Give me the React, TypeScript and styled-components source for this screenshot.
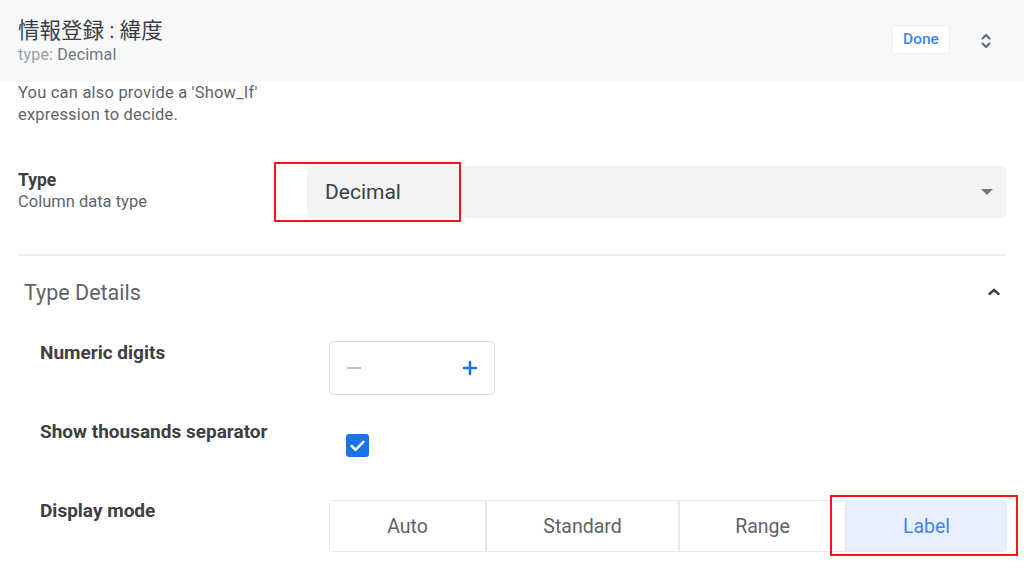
import styled, { createGlobalStyle } from "styled-components";

const Global = createGlobalStyle`
  html, body {
    margin: 0;
    padding: 0;
    background: #ffffff;
    font-family: Roboto, "Noto Sans CJK JP", "Liberation Sans", sans-serif;
  }
  * { box-sizing: border-box; }
`;

const Page = styled.div`
  width: 1024px;
  height: 576px;
  overflow: hidden;
  background: #fff;
`;

const Header = styled.div`
  height: 82px;
  background: #f7f8f9;
  display: flex;
  align-items: center;
  padding: 0 30px 0 18px;
`;

const TitleBlock = styled.div`
  flex: 1;
  display: flex;
  flex-direction: column;
`;

const Title = styled.div`
  font-family: Roboto, "Noto Sans CJK JP", sans-serif;
  font-size: 21.5px;
  line-height: 26px;
  color: #3c4043;
`;

const SubTitle = styled.div`
  font-size: 16px;
  line-height: 20px;
  margin-top: 1px;
  color: #70757a;
  letter-spacing: 0.2px;
  span {
    color: #9aa0a6;
  }
`;

const DoneButton = styled.button`
  width: 58px;
  height: 29px;
  border: 1px solid #eceef0;
  border-radius: 4px;
  background: #fff;
  color: #4285f4;
  font-family: Roboto, sans-serif;
  font-weight: 500;
  font-size: 15.5px;
  padding: 0;
  margin: 0 28px 4px 0;
`;

const IconSlot = styled.div`
  width: 16px;
  height: 16px;
  display: flex;
  align-items: center;
  justify-content: center;
  color: #6b6f73;
`;

const Body = styled.div`
  padding: 0 18px;
`;

const Help = styled.p`
  margin: 0;
  font-size: 16.5px;
  line-height: 22px;
  color: #5f6368;
  letter-spacing: 0.2px;
`;

const TypeRow = styled.div`
  display: grid;
  grid-template-columns: 289px 1fr;
  margin-top: 40px;
`;

const LabelCol = styled.div`
  padding-top: 3px;
`;

const FieldLabel = styled.div`
  font-size: 17.5px;
  font-weight: 700;
  line-height: 22px;
  color: #3c4043;
`;

const FieldHint = styled.div`
  font-size: 16.5px;
  line-height: 22px;
  color: #5f6368;
`;

const SelectWrap = styled.div`
  position: relative;
`;

const Select = styled.div`
  height: 52px;
  background: #f1f3f4;
  border-radius: 5px;
  display: flex;
  align-items: center;
  padding: 0 13px 0 18px;
  font-size: 21px;
  color: #3c4043;
`;

const SelectValue = styled.span`
  flex: 1;
`;

const Caret = styled.span`
  width: 0;
  height: 0;
  border-left: 6px solid transparent;
  border-right: 6px solid transparent;
  border-top: 6px solid #757575;
`;

const Highlight = styled.div<{ $left: number; $top: number; $w: number; $h: number }>`
  position: absolute;
  left: ${(p) => p.$left}px;
  top: ${(p) => p.$top}px;
  width: ${(p) => p.$w}px;
  height: ${(p) => p.$h}px;
  border: 2px solid #f2141b;
  pointer-events: none;
`;

const Divider = styled.hr`
  border: none;
  border-top: 2px solid #eceef0;
  margin: 36px 0 0;
`;

const SectionHead = styled.div`
  display: flex;
  align-items: center;
  justify-content: space-between;
  height: 72px;
  padding: 0 4px 0 6px;
`;

const SectionTitle = styled.div`
  font-size: 21.5px;
  color: #5f6368;
`;

const DetailRow = styled.div<{ $mt: number }>`
  display: grid;
  grid-template-columns: 289px 1fr;
  padding-left: 22px;
  margin-top: ${(p) => p.$mt}px;
`;

const DetailLabel = styled.div`
  font-size: 19px;
  font-weight: 700;
  line-height: 24px;
  color: #3c4043;
`;

const Stepper = styled.div`
  width: 166px;
  height: 54px;
  border: 1px solid #dadce0;
  border-radius: 4px;
  display: flex;
  align-items: center;
  justify-content: space-between;
  padding: 0 16px 0 17px;
`;

const Minus = styled.span`
  width: 14px;
  height: 2px;
  background: #bdc1c6;
`;

const CheckWrap = styled.div`
  padding: 14px 0 0 17px;
`;

const Checkbox = styled.div`
  width: 23px;
  height: 23px;
  border-radius: 3px;
  background: #1a73e8;
  display: flex;
  align-items: center;
  justify-content: center;
`;

const Segments = styled.div`
  position: relative;
  display: flex;
  height: 52px;
  margin-top: 1px;
  border: 1px solid #e8eaed;
  border-radius: 4px;
`;

const Segment = styled.div<{ $active?: boolean }>`
  flex: 1 1 auto;
  display: flex;
  align-items: center;
  justify-content: center;
  font-size: 19.5px;
  color: ${(p) => (p.$active ? "#4285f4" : "#5f6368")};
  background: ${(p) => (p.$active ? "#e8f0fe" : "#fff")};
  border-left: 2px solid #e8eaed;
  &:first-child {
    border-left: none;
  }
  &:last-child {
    border-radius: 0 4px 4px 0;
  }
`;

const segments = [
  { label: "Auto", w: 155 },
  { label: "Standard", w: 193 },
  { label: "Range", w: 167 },
  { label: "Label", w: 161 },
];

export default function App() {
  return (
    <Page>
      <Global />
      <Header>
        <TitleBlock>
          <Title>情報登録 : 緯度</Title>
          <SubTitle>
            <span>type:</span> Decimal
          </SubTitle>
        </TitleBlock>
        <DoneButton>Done</DoneButton>
        <IconSlot>
          <svg width="12" height="18" viewBox="0 0 12 18" fill="none" stroke="currentColor" strokeWidth="2.2" strokeLinecap="round" strokeLinejoin="round">
            <path d="M2.5 6.5 6 3l3.5 3.5" />
            <path d="M2.5 11.5 6 15l3.5-3.5" />
          </svg>
        </IconSlot>
      </Header>
      <Body>
        <Help>
          You can also provide a 'Show_If'
          <br />
          expression to decide.
        </Help>
        <TypeRow>
          <LabelCol>
            <FieldLabel>Type</FieldLabel>
            <FieldHint>Column data type</FieldHint>
          </LabelCol>
          <SelectWrap>
            <Select>
              <SelectValue>Decimal</SelectValue>
              <Caret />
            </Select>
            <Highlight $left={-33} $top={-4} $w={187} $h={60} />
          </SelectWrap>
        </TypeRow>
        <Divider />
        <SectionHead>
          <SectionTitle>Type Details</SectionTitle>
          <IconSlot>
            <svg width="14" height="10" viewBox="0 0 14 10" fill="none" stroke="#3c4043" strokeWidth="2.4" strokeLinecap="round" strokeLinejoin="round">
              <path d="M2.5 7 7 2.8 11.5 7" />
            </svg>
          </IconSlot>
        </SectionHead>
        <DetailRow $mt={13}>
          <DetailLabel>Numeric digits</DetailLabel>
          <Stepper>
            <Minus />
            <svg width="16" height="16" viewBox="0 0 16 16" stroke="#1a73e8" strokeWidth="2.6" strokeLinecap="round">
              <path d="M8 2v12M2 8h12" />
            </svg>
          </Stepper>
        </DetailRow>
        <DetailRow $mt={25}>
          <DetailLabel>Show thousands separator</DetailLabel>
          <CheckWrap>
            <Checkbox>
              <svg width="19" height="19" viewBox="0 0 16 16" fill="none" stroke="#fff" strokeWidth="2.1" strokeLinecap="round" strokeLinejoin="round">
                <path d="M3 8.4 6.3 11.6 13 4.9" />
              </svg>
            </Checkbox>
          </CheckWrap>
        </DetailRow>
        <DetailRow $mt={42}>
          <DetailLabel>Display mode</DetailLabel>
          <Segments>
            {segments.map((s, i) => (
              <Segment key={s.label} $active={i === 3} style={{ width: s.w }}>
                {s.label}
              </Segment>
            ))}
            <Highlight $left={500} $top={-6} $w={188} $h={61} />
          </Segments>
        </DetailRow>
      </Body>
    </Page>
  );
}
